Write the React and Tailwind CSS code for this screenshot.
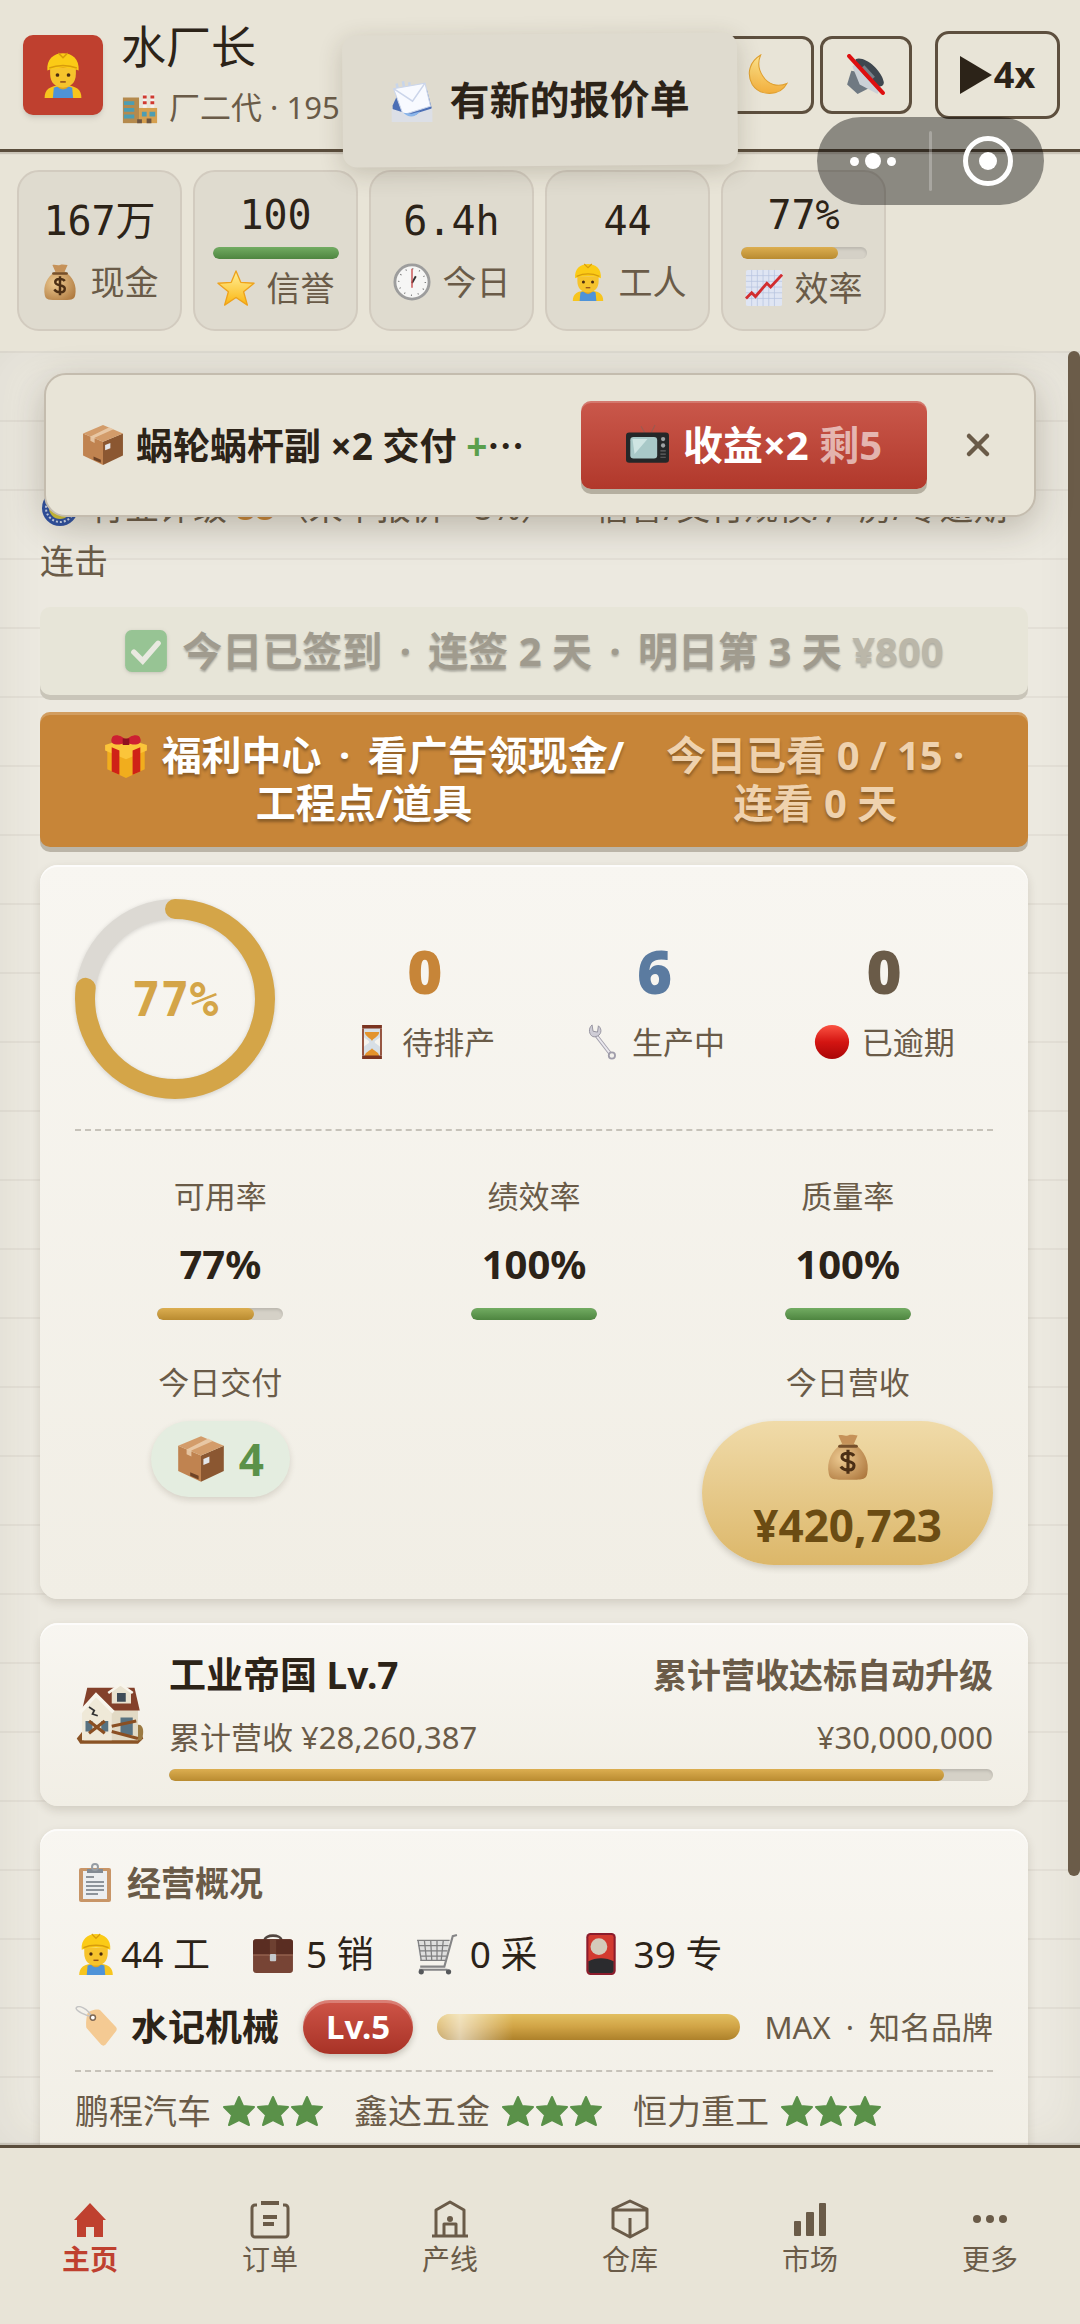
import { X } from "lucide-react";

const art = {
  worker: (
    <g transform="translate(4 0) scale(0.8 1)">
      <path d="M0 40c0-7 5-11 20-11s20 4 20 11z" fill="#f7c51e" />
      <path d="M9 40l1-9c5-2 15-2 20 0l1 9z" fill="#4f93d8" />
      <path d="M13 28c2 6 12 6 14 0l-1-5H14z" fill="#e0a420" />
      <path d="M6 14h28v5c0 8-6 12-14 12S6 27 6 19z" fill="#f6c32c" />
      <ellipse cx="14" cy="20" rx="2" ry="1.6" fill="#4b2c11" />
      <ellipse cx="26" cy="20" rx="2" ry="1.6" fill="#4b2c11" />
      <path d="M17 26h6" stroke="#95531a" strokeWidth="1.4" />
      <path d="M3 16C2 6 10 1 20 1s18 5 17 15c-9-3-25-3-34 0z" fill="#fbcb16" />
      <path d="M15 1l5 4 5-4M5 14c9-3 21-3 30 0" stroke="#d89c0b" strokeWidth="1.4" fill="none" />
    </g>
  ),
  factory: (
    <>
      <path d="M23 6h4v16h-4zM31 6h4v16h-4z" fill="#f4f1ee" />
      <path d="M23 8h4v3h-4zM23 14h4v3h-4zM31 8h4v3h-4zM31 14h4v3h-4z" fill="#cf3a31" />
      <path d="M2 10h17v27H2z" fill="#b58a4d" />
      <path d="M19 21h19v16H19z" fill="#d6a04f" />
      <path d="M3 14h11v4H3zM3 21h11v4H3zM3 28h11v4H3zM22 25h5v5h-5zM30 25h6v5h-6z" fill="#4d9db2" />
      <path d="M17 33h5v4h-5zM27 32h5v5h-5z" fill="#6c5542" />
    </>
  ),
  mail: (
    <>
      <path d="M6 3l2 10M12 1l2 12M18 2l1 10" stroke="#c8d5ea" strokeWidth="2.4" />
      <path d="M2 24L7 13l28-3 4 16v13H2z" fill="#4c6fb5" />
      <path d="M3 8l30-5 5 22-26 8z" fill="#f8faff" stroke="#ccd6ea" />
      <path d="M3 8l18 12L33 3" stroke="#cbd5ea" strokeWidth="1.5" fill="none" />
      <path d="M1 27l12 4c4 4 10 4 14 0l13-4v13H1z" fill="#dcdfe6" />
      <path d="M12 31c5 5 11 5 16-1l-8 2z" fill="#8ab5ea" />
    </>
  ),
  moon: (
    <>
      <defs>
        <linearGradient id="moon" x1="0" y1="0" x2="0" y2="1">
          <stop offset="0" stopColor="#fde48c" />
          <stop offset="1" stopColor="#f2ae3c" />
        </linearGradient>
      </defs>
      <path
        d="M13 1C3 7-1 18 5 29c7 11 26 12 33-1-9 4-18 1-23-7C11 15 10 8 13 1z"
        fill="url(#moon)"
        stroke="#e0a030"
      />
    </>
  ),
  muted: (
    <>
      <path d="M2 29l4-13 12 2 6 14-12 6z" fill="#6f7982" />
      <path d="M7 12L14 6l20 24-3 8-17-9z" fill="#cbd1d7" />
      <path d="M10 5c8-4 25 10 27 22 0 5-5 5-10 1C18 21 10 11 10 5z" fill="#3f474f" />
      <path d="M17 12l10 11" stroke="#77818a" strokeWidth="4" />
      <path d="M4 2l32 35" stroke="#de0f10" strokeWidth="4" strokeLinecap="round" />
    </>
  ),
  bag: (
    <>
      <defs>
        <radialGradient id="bag" cx="0.35" cy="0.4" r="0.75">
          <stop offset="0" stopColor="#eecb92" />
          <stop offset="1" stopColor="#b07b41" />
        </radialGradient>
      </defs>
      <path d="M12 2c3-1 5 1 8 0s5 0 8 0l-4 9h-8z" fill="#c69259" />
      <path d="M15 9h10c9 6 13 15 11 25-1 5-4 5-16 5s-15 0-16-5C2 24 6 15 15 9z" fill="url(#bag)" />
      <path d="M13 11h14" stroke="#76502b" strokeWidth="2.5" strokeLinecap="round" />
      <path
        d="M25 19c-2-3-10-3-10 1 0 5 10 2 10 7 0 5-8 5-11 1M20 14v20"
        stroke="#4c2f15"
        strokeWidth="2.6"
        fill="none"
      />
    </>
  ),
  star: (
    <>
      <defs>
        <linearGradient id="star" x1="0" y1="0" x2="0" y2="1">
          <stop offset="0" stopColor="#fff09a" />
          <stop offset="1" stopColor="#fbb612" />
        </linearGradient>
      </defs>
      <path
        d="M20 2l5 12 14 1-11 9 4 14-12-8-12 8 4-14L1 15l14-1z"
        fill="url(#star)"
        stroke="#eea21b"
        strokeWidth="1.4"
        strokeLinejoin="round"
      />
    </>
  ),
  clock: (
    <>
      <circle cx="20" cy="20" r="18" fill="#f6f6f5" stroke="#9d9d9d" strokeWidth="3" />
      <circle cx="20" cy="20" r="14" fill="none" stroke="#777" strokeWidth="1.6" strokeDasharray="1 6.33" />
      <path d="M20 21l4-7" stroke="#333" strokeWidth="2" />
      <path d="M20 26V6" stroke="#c64546" strokeWidth="1.4" />
    </>
  ),
  chart: (
    <>
      <rect x="1" y="1" width="38" height="38" rx="2" fill="#dfe5f3" />
      <path
        d="M7 1v38M13 1v38M19 1v38M25 1v38M31 1v38M1 7h38M1 13h38M1 19h38M1 25h38M1 31h38"
        stroke="#b7c4df"
        strokeWidth="0.8"
      />
      <path d="M1 31l6-6 4 4 12-14 4 4L39 6" stroke="#d22d2f" strokeWidth="3" fill="none" />
    </>
  ),
  box: (
    <>
      <path d="M1 9l19 8v22L1 30z" fill="#c08350" />
      <path d="M39 9l-19 8v22l19-9z" fill="#8b5731" />
      <path d="M20 1l19 8-19 8L1 9z" fill="#d39c6a" />
      <path d="M26 3l4 2-18 8v5l-4-2v-4z" fill="#ebcfae" opacity="0.85" />
      <path d="M22 20l5-2v5l-5 2z" fill="#e4e6ea" />
      <path d="M11 31l7 3v3l-7-3z" fill="#6e4326" />
    </>
  ),
  tv: (
    <>
      <path d="M14 2l4 7M27 1l-4 8" stroke="#9b5a50" strokeWidth="1" />
      <rect x="0" y="8" width="40" height="28" rx="3" fill="#252728" />
      <rect x="4" y="12" width="25" height="20" rx="3" fill="#a9c9c8" />
      <path d="M6 14h14L8 28z" fill="#cfe5e3" />
      <circle cx="34.5" cy="14" r="2" fill="#9ea2a4" />
      <circle cx="34.5" cy="20" r="2" fill="#9ea2a4" />
      <path d="M32 25h5M32 28h5M32 31h5" stroke="#666" strokeWidth="1" />
    </>
  ),
  badge: (
    <>
      <circle cx="20" cy="20" r="18" fill="#2d50a3" />
      <circle cx="20" cy="20" r="14" fill="none" stroke="#cdd8ee" strokeWidth="2" strokeDasharray="2 2" />
      <circle cx="20" cy="20" r="11" fill="#d3c53a" />
      <circle cx="20" cy="20" r="6" fill="#37503a" />
    </>
  ),
  check: (
    <>
      <rect x="1" y="1" width="38" height="38" rx="6" fill="#97c494" />
      <path d="M9 21l8 8 14-16" stroke="#e9e9e0" strokeWidth="5" fill="none" strokeLinecap="round" />
    </>
  ),
  gift: (
    <>
      <path d="M3 15l17 7 17-7v17l-17 8-17-8z" fill="#f1ad1d" />
      <path d="M1 10l19-6 19 6v5l-19 8L1 15z" fill="#fbc53a" />
      <path d="M7 12l7 3v22l-7-3zM33 12l-7 3v22l7-3z" fill="#cf2117" />
      <path d="M20 8C12 11 5 10 7 4c1-5 10-3 13 2 3-5 12-7 13-2 2 6-5 7-13 4z" fill="#cd2032" />
      <path d="M17 4h6v6h-6z" fill="#8f1020" />
    </>
  ),
  hourglass: (
    <>
      <path d="M10 4h20v8c0 4-7 6-7 8s7 4 7 8v8H10v-8c0-4 7-6 7-8s-7-4-7-8z" fill="#d7dfe6" />
      <path d="M12 9h16c0 5-7 7-8 10-1-3-8-5-8-10zM12 36c0-5 6-6 8-9 2 3 8 4 8 9z" fill="#e3932d" />
      <path d="M9 1h22v4H9zM9 35h22v4H9z" fill="#7b3420" />
      <path d="M10 5v30M30 5v30" stroke="#8d4630" strokeWidth="2" />
    </>
  ),
  wrench: (
    <>
      <path d="M13 12l17 22" stroke="#a4a1ad" strokeWidth="4" strokeLinecap="round" />
      <path d="M13 12l17 22" stroke="#ebe9ee" strokeWidth="2" />
      <path d="M9 1l1 7 5 1 1-7c5 4 3 11-3 12-6 2-10-8-4-13z" fill="#cfcdd6" stroke="#918e9b" />
      <circle cx="31" cy="35" r="3.5" fill="#f3f1ec" stroke="#a09daa" strokeWidth="2" />
    </>
  ),
  red: (
    <>
      <defs>
        <linearGradient id="red" x1="0" y1="0" x2="0" y2="1">
          <stop offset="0" stopColor="#fb5342" />
          <stop offset="0.5" stopColor="#d41512" />
          <stop offset="1" stopColor="#a90507" />
        </linearGradient>
      </defs>
      <circle cx="20" cy="20" r="19" fill="url(#red)" />
    </>
  ),
  house: (
    <>
      <path d="M1 34l4-5h32l2 5-3 3H3z" fill="#8a5325" />
      <path d="M34 27c5-3 6 3 4 8h-5z" fill="#9b7a42" />
      <path d="M5 17h31v18H5z" fill="#e2dac5" />
      <path d="M7 5h27l3 13H4z" fill="#83402a" />
      <path d="M4 18l8-9 9 9v17H4z" fill="#efe9d8" />
      <path d="M3 19l9-10 10 10" stroke="#f8f5ec" strokeWidth="2" fill="none" />
      <path d="M21 7l5-4 6 4v7H21z" fill="#e9e2d0" />
      <path d="M19 8l7-5 7 5" stroke="#f8f5ec" strokeWidth="1.5" fill="none" />
      <path d="M24 8h5v5h-5z" fill="#3e4b57" />
      <path d="M6 24h4v6H6zM15 24h4v6h-4zM26 22h7v10h-7z" fill="#587281" />
      <path d="M8 24l9 7M17 24l-9 7M21 27l14-3M21 30l15 4" stroke="#8a4f22" strokeWidth="1.8" />
      <path d="M8 16l3 2-1 2 3 1" stroke="#333" strokeWidth="1" fill="none" />
    </>
  ),
  clipboard: (
    <>
      <rect x="4" y="5" width="32" height="34" rx="2" fill="#c89567" />
      <path d="M8 8h24v28H8z" fill="#eceef0" />
      <path d="M11 14h8M11 19h18M11 23h18M11 27h18M11 31h12" stroke="#6e757e" strokeWidth="1.5" />
      <path d="M12 6h16v4H12z" fill="#838b94" />
      <circle cx="20" cy="4" r="3" fill="none" stroke="#969da4" strokeWidth="2" />
    </>
  ),
  briefcase: (
    <>
      <path d="M12 7c0-6 16-6 16 0" stroke="#514640" strokeWidth="2.4" fill="none" />
      <rect x="1" y="6" width="38" height="32" rx="3" fill="#774435" />
      <path d="M1 9c0-2 1-3 3-3h32c2 0 3 1 3 3v12H1z" fill="#5a2d22" />
      <path d="M1 21h38" stroke="#93604e" strokeWidth="1.5" />
      <path d="M17 6h6v15h-6z" fill="#6d4031" />
      <rect x="17" y="20" width="6" height="7" rx="1" fill="#c5c8cb" />
    </>
  ),
  cart: (
    <>
      <path d="M1 7h31l-4 19H4z" fill="#dedede" />
      <path
        d="M1 7h31M2 12h29M3 17h27M4 22h25M4 26h24M2 7l3 19M8 7l2 19M14 7l1 19M20 7v19M26 7l-2 19"
        stroke="#7f7f80"
        strokeWidth="1.2"
      />
      <path d="M39 2l-4 1-8 29H4M3 35h27" stroke="#858586" strokeWidth="2" fill="none" />
      <circle cx="5" cy="37" r="2.5" fill="#56585b" />
      <circle cx="31" cy="37" r="2.5" fill="#56585b" />
    </>
  ),
  hanafuda: (
    <>
      <rect x="6" y="0" width="28" height="40" rx="4" fill="#8c1c2c" />
      <rect x="8" y="2" width="24" height="36" rx="2" fill="#d23a30" />
      <circle cx="18" cy="13" r="8" fill="#d4cbbb" />
      <path d="M8 27c7-4 17-4 24 0v9c0 1-1 2-2 2H10c-1 0-2-1-2-2z" fill="#2b2b2e" />
    </>
  ),
  tag: (
    <>
      <path
        d="M12 7c0-2 10-5 12-3l15 16c1 1 1 3 0 4L29 37c-1 1-3 1-4 0L11 21c-1-2 0-12 1-14z"
        fill="#f4ca93"
      />
      <path d="M17 12C12 1 3-1 1 2c0 3 9 7 15 8" stroke="#c4c4c4" strokeWidth="1.4" fill="none" />
      <circle cx="17" cy="11" r="2.5" fill="#fff" stroke="#7e6854" strokeWidth="1.4" />
    </>
  ),
};

const Art = ({ name, className }) => (
  <svg viewBox="0 0 40 40" className={`inline-block shrink-0 ${className}`} aria-hidden="true">
    {art[name]}
  </svg>
);

const tones = {
  green: "bg-linear-to-b from-[#72ac62] to-[#4e8540]",
  gold: "bg-linear-to-b from-[#dcae50] to-[#b98b30]",
};

const Bar = ({ value, tone, className }) => (
  <div
    className={`h-3 shrink-0 overflow-hidden rounded-full bg-[#d5d1c7] shadow-[inset_0_2px_3px_rgba(0,0,0,0.12)] ${className}`}
  >
    <div className={`h-full rounded-full ${tones[tone]}`} style={{ width: `${value}%` }} />
  </div>
);

const Dot = () => <span className="mx-[7px]">·</span>;

const Card = ({ className, children }) => (
  <section
    className={`rounded-[18px] bg-linear-to-b from-[#f8f6f1] to-[#f1eee5] px-[35px] shadow-[inset_0_2px_0_rgba(255,255,255,0.7),0_4px_10px_rgba(60,50,30,0.15)] ${className}`}
  >
    {children}
  </section>
);

const stats = [
  { value: "167万", icon: "bag", label: "现金" },
  { value: "100", icon: "star", label: "信誉", bar: 100, tone: "green" },
  { value: "6.4h", icon: "clock", label: "今日" },
  { value: "44", icon: "worker", label: "工人" },
  { value: "77%", icon: "chart", label: "效率", bar: 77, tone: "gold" },
];

const queue = [
  { value: 0, icon: "hourglass", label: "待排产", color: "text-[#c78538]" },
  { value: 6, icon: "wrench", label: "生产中", color: "text-[#5b7ba0]" },
  { value: 0, icon: "red", label: "已逾期", color: "text-[#6a5b48]" },
];

const rates = [
  { label: "可用率", value: 77, tone: "gold" },
  { label: "绩效率", value: 100, tone: "green" },
  { label: "质量率", value: 100, tone: "green" },
];

const staff = [
  { icon: "worker", text: "44 工", gap: "gap-1" },
  { icon: "briefcase", text: "5 销", gap: "gap-3" },
  { icon: "cart", text: "0 采", gap: "gap-3" },
  { icon: "hanafuda", text: "39 专", gap: "gap-3" },
];

const clients = ["鹏程汽车", "鑫达五金", "恒力重工"];

const tabs = [
  {
    label: "主页",
    active: true,
    icon: <path d="M20 4l16 17h-3v17h-9V28h-8v10H7V21H4z" fill="currentColor" />,
  },
  {
    label: "订单",
    icon: (
      <>
        <path d="M7 6H5a3 3 0 0 0-3 3v26a3 3 0 0 0 3 3h30a3 3 0 0 0 3-3V9a3 3 0 0 0-3-3h-2" />
        <path d="M11 4h18M13 18h14M13 25h11" strokeWidth="4" />
      </>
    ),
  },
  {
    label: "产线",
    icon: (
      <>
        <path d="M2 37h36M6 37V11L20 3l14 8v26M14 37V25h12v12" />
        <circle cx="20" cy="20" r="3" fill="currentColor" stroke="none" />
      </>
    ),
  },
  {
    label: "仓库",
    icon: <path d="M20 2l17 8v19l-17 9-17-9V10zM3 11h34M20 19v18" />,
  },
  {
    label: "市场",
    icon: (
      <g fill="currentColor" stroke="none">
        <rect x="4" y="22" width="7" height="15" rx="1" />
        <rect x="16" y="13" width="8" height="24" rx="1" />
        <rect x="29" y="4" width="7" height="33" rx="1" />
      </g>
    ),
  },
  {
    label: "更多",
    icon: (
      <g fill="currentColor" stroke="none">
        <circle cx="7" cy="20" r="4" />
        <circle cx="20" cy="20" r="4" />
        <circle cx="33" cy="20" r="4" />
      </g>
    ),
  },
];

const Header = () => (
  <header className="relative z-10 flex items-center border-b-[3px] border-[#5a4d3c] pt-[15px] pr-5 pb-[14px] pl-[23px] shadow-[0_2px_1px_rgba(90,77,60,0.2)]">
    <div className="flex size-20 items-center justify-center rounded-[10px] bg-[#bf402f] shadow-md">
      <Art name="worker" className="size-[46px]" />
    </div>
    <div className="ml-[18px] min-w-0 flex-1">
      <h1 className="text-[45px] leading-[64px]">水厂长</h1>
      <p className="flex items-center gap-[10px] text-[31px] leading-[56px] whitespace-nowrap text-[#6a5b48]">
        <Art name="factory" className="size-[38px]" />
        <span>
          厂二代 · 195
        </span>
      </p>
    </div>
    <button
      aria-label="夜间模式"
      className="flex h-[78px] w-[92px] items-center justify-center rounded-xl border-3 border-[#5d4f3e]"
    >
      <Art name="moon" className="size-[42px]" />
    </button>
    <button
      aria-label="静音"
      className="ml-[6px] flex h-[78px] w-[92px] items-center justify-center rounded-xl border-3 border-[#5d4f3e]"
    >
      <Art name="muted" className="size-[42px]" />
    </button>
    <button className="ml-[23px] flex h-[88px] w-[125px] items-center justify-center gap-[2px] rounded-[14px] border-3 border-[#5d4f3e] text-[36px] font-bold">
      <svg viewBox="0 0 32 38" className="h-[38px] w-8" aria-hidden="true">
        <path d="M0 0l32 19L0 38z" fill="currentColor" />
      </svg>
      4x
    </button>
  </header>
);

const Stats = () => (
  <section className="flex gap-[11px] overflow-hidden px-[17px] pt-[18px] pb-5">
    {stats.map((s) => (
      <div
        key={s.label}
        className="flex h-[161px] w-[165px] shrink-0 flex-col items-center justify-center rounded-[22px] border-2 border-[#d2cbbf] bg-[#dfdbcf]"
      >
        <span className="font-['DejaVu_Sans_Mono','Noto_Sans_CJK_SC',monospace] text-[40px] leading-[63px]">
          {s.value}
        </span>
        {s.bar && <Bar value={s.bar} tone={s.tone} className="w-[126px]" />}
        <span className="flex items-center gap-3 text-[34px] leading-[58px] text-[#6a5b48]">
          <Art name={s.icon} className="size-[38px]" />
          {s.label}
        </span>
      </div>
    ))}
  </section>
);

const DeliveryNotice = () => (
  <div className="absolute inset-x-11 top-[22px] z-20 flex items-center rounded-[22px] border-2 border-[#c4bcae] bg-[#e8e4d7] py-[26px] pr-[38px] pl-9 shadow-[0_10px_36px_rgba(60,50,30,0.28)]">
    <Art name="box" className="size-[42px]" />
    <p className="ml-3 min-w-0 flex-1 text-[37px] leading-[50px] font-bold whitespace-nowrap">
      蜗轮蜗杆副 ×2 交付 <span className="text-[#5a9f4c]">+</span>
      <span className="font-['Noto_Sans_CJK_SC',sans-serif]">…</span>
    </p>
    <button className="flex h-[88px] w-[346px] shrink-0 items-center justify-center gap-[14px] rounded-[10px] bg-linear-to-b from-[#ca584b] to-[#b1382b] text-[40px] font-bold whitespace-nowrap text-white shadow-[0_5px_0_#b5afa0,inset_0_2px_0_rgba(255,255,255,0.2)]">
      <Art name="tv" className="size-[43px]" />
      <span>
        收益×2 <span className="text-white/60">剩5</span>
      </span>
    </button>
    <button aria-label="关闭" className="ml-[33px] shrink-0 text-[#6a5b48]">
      <X className="size-9" strokeWidth={3} />
    </button>
  </div>
);

const Production = () => (
  <Card className="mt-[18px] py-[34px]">
    <div className="flex items-center border-b-2 border-dashed border-[#c6c2b9] pb-[30px]">
      <div className="grid size-[200px] shrink-0 place-items-center">
        <svg viewBox="0 0 200 200" className="col-start-1 row-start-1 size-full drop-shadow-sm" aria-hidden="true">
          <circle cx="100" cy="100" r="90" fill="none" stroke="#dcd9d3" strokeWidth="20" />
          <circle
            cx="100"
            cy="100"
            r="90"
            fill="none"
            stroke="#d4a548"
            strokeWidth="20"
            strokeLinecap="round"
            strokeDasharray="77 100"
            pathLength="100"
            transform="rotate(-90 100 100)"
          />
        </svg>
        <span className="z-10 col-start-1 row-start-1 font-['DejaVu_Sans_Mono',monospace] text-[48px] font-bold text-[#d4a548]">
          77%
        </span>
      </div>
      <div className="ml-[41px] grid flex-1 grid-cols-3 gap-3 pt-1">
        {queue.map((q) => (
          <div key={q.label} className="flex flex-col items-center">
            <span className={`text-[60px] leading-[72px] font-black ${q.color}`}>{q.value}</span>
            <span className="mt-[10px] flex items-center gap-3 text-[31px] leading-[50px] text-[#6a5b48]">
              <Art name={q.icon} className="size-9" />
              {q.label}
            </span>
          </div>
        ))}
      </div>
    </div>
    <div className="grid grid-cols-3 gap-x-[23px] gap-y-[39px] pt-[42px] text-center">
      {rates.map((r) => (
        <div key={r.label} className="flex flex-col items-center">
          <span className="text-[31px] leading-[46px] text-[#6a5b48]">{r.label}</span>
          <span className="mt-[15px] text-[40px] leading-[60px] font-bold">{r.value}%</span>
          <Bar value={r.value} tone={r.tone} className="mt-[14px] w-[126px]" />
        </div>
      ))}
      <div className="flex flex-col items-center">
        <span className="text-[31px] leading-[46px] text-[#6a5b48]">今日交付</span>
        <span className="mt-4 flex items-center gap-[14px] rounded-full bg-[#e4ede0] px-[26px] py-[6px] text-[44px] leading-[64px] font-bold text-[#5a9149] shadow-[0_3px_6px_rgba(60,50,30,0.15)]">
          <Art name="box" className="size-12" />4
        </span>
      </div>
      <div className="col-start-3 flex flex-col items-center">
        <span className="text-[31px] leading-[46px] text-[#6a5b48]">今日营收</span>
        <span className="mt-4 flex w-full flex-col items-center rounded-[72px] bg-linear-to-b from-[#f0dba9] to-[#dcb769] pt-3 pb-2 text-[44px] leading-[64px] font-bold text-[#6b4c13] shadow-[0_3px_6px_rgba(60,50,30,0.2)]">
          <Art name="bag" className="mb-3 size-12" />
          ¥420,723
        </span>
      </div>
    </div>
  </Card>
);

const Level = () => (
  <Card className="mt-6 flex items-center gap-6 pt-6 pb-[25px]">
    <Art name="house" className="size-[70px]" />
    <div className="flex-1">
      <div className="flex items-center justify-between leading-[56px] font-bold">
        <h2 className="text-[37px]">工业帝国 Lv.7</h2>
        <span className="text-[34px] text-[#6a5b48]">累计营收达标自动升级</span>
      </div>
      <div className="mt-3 flex justify-between text-[31px] leading-[44px] text-[#6a5b48]">
        <span>累计营收 ¥28,260,387</span>
        <span>¥30,000,000</span>
      </div>
      <Bar value={94} tone="gold" className="mt-[10px]" />
    </div>
  </Card>
);

const Overview = () => (
  <Card className="mt-[23px] pt-[29px] pb-10">
    <h2 className="flex items-center gap-3 text-[34px] leading-[50px] font-bold text-[#6a5b48]">
      <Art name="clipboard" className="size-10" />
      经营概况
    </h2>
    <ul className="mt-5 flex gap-[42px] text-[37px] leading-[52px]">
      {staff.map((s) => (
        <li key={s.text} className={`flex items-center ${s.gap}`}>
          <Art name={s.icon} className="size-[42px]" />
          {s.text}
        </li>
      ))}
    </ul>
    <div className="mt-5 flex items-center">
      <Art name="tag" className="size-[42px]" />
      <span className="ml-[14px] text-[37px] leading-[54px] font-bold">水记机械</span>
      <span className="ml-6 rounded-full bg-linear-to-b from-[#cf5548] to-[#a83226] px-[23px] text-[33px] leading-[54px] font-bold text-white shadow-[0_3px_6px_rgba(60,50,30,0.25),inset_0_3px_0_rgba(255,255,255,0.25)]">
        Lv.5
      </span>
      <div className="ml-6 h-[26px] flex-1 overflow-hidden rounded-full bg-linear-to-b from-[#e2bf60] via-[#d0a345] to-[#ad812a]">
        <div className="h-full w-1/4 bg-linear-to-r from-white/30 via-white/60 via-30% to-white/0" />
      </div>
      <span className="ml-6 text-[31px] text-[#6a5b48]">
        MAX <Dot /> 知名品牌
      </span>
    </div>
    <ul className="mt-4 flex gap-[30px] border-t-2 border-dashed border-[#c6c2b9] pt-[14px] text-[34px] leading-[50px] text-[#6a5b48]">
      {clients.map((name) => (
        <li key={name} className="flex items-center gap-[11px]">
          {name}
          <svg viewBox="0 0 102 32" className="h-8 w-[102px]" aria-label="3 星">
            {[0, 34, 68].map((x) => (
              <path
                key={x}
                d="M17 2l4 9 11 1-8 8 3 10-10-5-10 5 3-10-8-8 11-1z"
                transform={`translate(${x} 0)`}
                fill="#5a9149"
                stroke="#5a9149"
                strokeWidth="2"
                strokeLinejoin="round"
              />
            ))}
          </svg>
        </li>
      ))}
    </ul>
  </Card>
);

const TabBar = () => (
  <nav className="relative z-10 grid shrink-0 grid-cols-6 border-t-[3px] border-[#5a4d3c] bg-[#e8e4d7] pt-[51px] pb-[47px] shadow-[0_-2px_1px_rgba(90,77,60,0.2)]">
    {tabs.map((t) => (
      <a
        key={t.label}
        href="#"
        className={`flex flex-col items-center gap-[2px] text-[28px] leading-[36px] ${
          t.active ? "font-bold text-[#bf402f]" : "text-[#6a5b48]"
        }`}
      >
        <svg
          viewBox="0 0 40 40"
          className="size-10"
          fill="none"
          stroke={t.active ? "none" : "currentColor"}
          strokeWidth="3"
          strokeLinejoin="round"
          aria-hidden="true"
        >
          {t.icon}
        </svg>
        {t.label}
      </a>
    ))}
  </nav>
);

export default function App() {
  return (
    <div className="relative flex h-screen flex-col overflow-hidden bg-[#e8e4d7] font-['Noto_Sans','Noto_Sans_CJK_SC',sans-serif] text-[#2c2318]">
      <Header />
      <Stats />

      <main className="relative min-h-0 flex-1 bg-[#ece9e0]">
        <div className="h-full overflow-hidden bg-[repeating-linear-gradient(to_bottom,#e3dfd6_0px,#e3dfd6_2px,transparent_2px,transparent_69px)] px-10 pt-[129px] pr-[52px] shadow-[inset_0_0_50px_rgba(60,50,30,0.07)]">
          <p className="text-[34px] leading-[54px] text-[#6a5b48]">
            <Art name="badge" className="mr-[11px] size-10 align-[-8px]" />
            行业评级 <span className="font-bold text-[#c78538]">88</span>（来单报价 +8%） <Dot /> 信誉/交付规模/厂房/零逾期
            连击
          </p>

          <button
            disabled
            className="mt-[19px] flex h-[88px] w-full items-center justify-center gap-[14px] rounded-[10px] bg-[#e7e5d8] text-[40px] font-bold text-[#a09b8e] shadow-[0_5px_0_#c9c5b9] text-shadow-[0_2px_2px_rgba(0,0,0,0.25)]"
          >
            <Art name="check" className="size-11 drop-shadow" />
            <span>
              今日已签到 <Dot /> 连签 2 天 <Dot /> 明日第 3 天 <span className="text-[#bbb7a9]">¥800</span>
            </span>
          </button>

          <button className="mt-[17px] flex w-full items-center justify-center gap-[42px] rounded-[10px] bg-[#c78538] pt-[19px] pb-5 text-[40px] leading-[48px] font-bold text-white shadow-[0_5px_0_#bbb5a8,inset_0_3px_0_rgba(255,255,255,0.2)] text-shadow-[0_3px_3px_rgba(0,0,0,0.3)]">
            <span>
              <Art name="gift" className="mr-[14px] size-11 align-[-8px]" />
              福利中心 <Dot /> 看广告领现金/
              <br />
              工程点/道具
            </span>
            <span className="text-[#efd2ae]">
              今日已看 0 / 15 ·
              <br />
              连看 0 天
            </span>
          </button>

          <Production />
          <Level />
          <Overview />
        </div>
        <div className="absolute top-0 right-0 h-[85%] w-3 rounded-full bg-[#6b5c49]" />
        <DeliveryNotice />
      </main>

      <TabBar />

      <div
        role="status"
        className="absolute top-[34px] left-1/2 z-30 flex -translate-x-1/2 rotate-[-0.5deg] items-center gap-[17px] rounded-[14px] bg-[#dfdbcf] px-[48px] py-[36px] text-[40px] leading-[60px] font-bold whitespace-nowrap shadow-[0_6px_24px_rgba(60,50,30,0.2)]"
      >
        <Art name="mail" className="size-[42px]" />
        有新的报价单
      </div>

      <div className="absolute top-[117px] right-9 z-40 flex h-[88px] w-[227px] items-center rounded-full bg-black/40">
        <button aria-label="菜单" className="flex flex-1 items-center justify-center gap-[6px]">
          <span className="size-[9px] rounded-full bg-white" />
          <span className="size-4 rounded-full bg-white" />
          <span className="size-[9px] rounded-full bg-white" />
        </button>
        <span className="h-[60px] w-[3px] rounded-full bg-white/25" />
        <button aria-label="退出" className="flex flex-1 items-center justify-center">
          <span className="flex size-[50px] items-center justify-center rounded-full border-5 border-white">
            <span className="size-[18px] rounded-full bg-white" />
          </span>
        </button>
      </div>
    </div>
  );
}
